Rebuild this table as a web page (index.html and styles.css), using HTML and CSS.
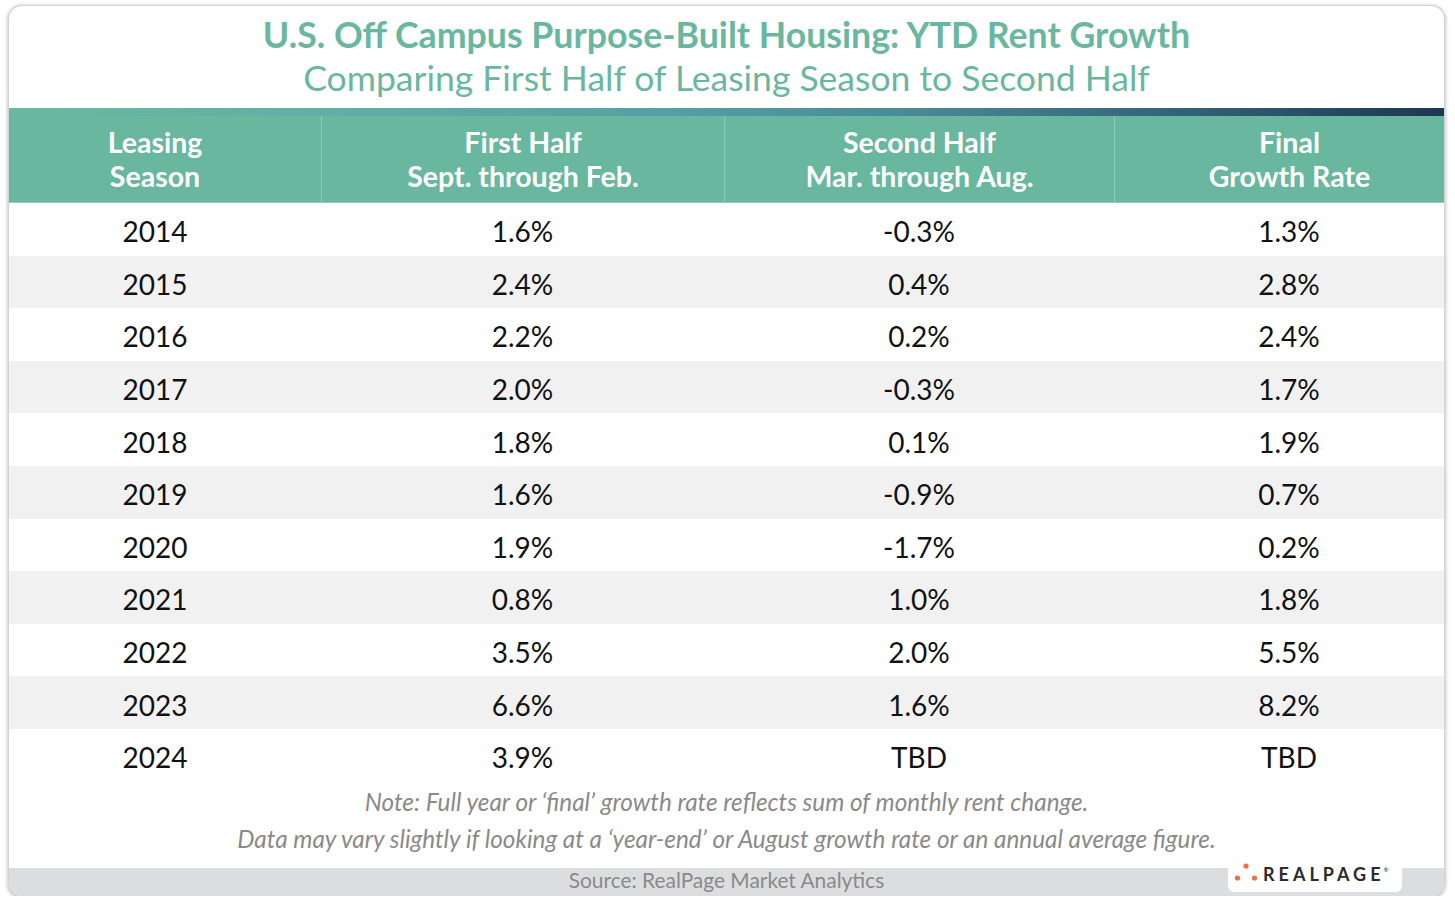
FILE: index.html
```html
<!DOCTYPE html>
<html lang="en">
<head>
<meta charset="utf-8">
<title>U.S. Off Campus Purpose-Built Housing: YTD Rent Growth</title>
<link rel="stylesheet" href="styles.css">
</head>
<body>
<div class="card">
  <header class="titles">
    <h1 class="title">U.S. Off Campus Purpose-Built Housing: YTD Rent Growth</h1>
    <h2 class="subtitle">Comparing First Half of Leasing Season to Second Half</h2>
  </header>
  <div class="accent"></div>
  <div class="table">
    <div class="row head">
      <div class="cell c1">Leasing<br>Season</div>
      <div class="cell c2">First Half<br>Sept. through Feb.</div>
      <div class="cell c3">Second Half<br>Mar. through Aug.</div>
      <div class="cell c4">Final<br>Growth Rate</div>
    </div>
    <div class="row"><div class="cell c1">2014</div><div class="cell c2">1.6%</div><div class="cell c3">-0.3%</div><div class="cell c4">1.3%</div></div>
    <div class="row alt"><div class="cell c1">2015</div><div class="cell c2">2.4%</div><div class="cell c3">0.4%</div><div class="cell c4">2.8%</div></div>
    <div class="row"><div class="cell c1">2016</div><div class="cell c2">2.2%</div><div class="cell c3">0.2%</div><div class="cell c4">2.4%</div></div>
    <div class="row alt"><div class="cell c1">2017</div><div class="cell c2">2.0%</div><div class="cell c3">-0.3%</div><div class="cell c4">1.7%</div></div>
    <div class="row"><div class="cell c1">2018</div><div class="cell c2">1.8%</div><div class="cell c3">0.1%</div><div class="cell c4">1.9%</div></div>
    <div class="row alt"><div class="cell c1">2019</div><div class="cell c2">1.6%</div><div class="cell c3">-0.9%</div><div class="cell c4">0.7%</div></div>
    <div class="row"><div class="cell c1">2020</div><div class="cell c2">1.9%</div><div class="cell c3">-1.7%</div><div class="cell c4">0.2%</div></div>
    <div class="row alt"><div class="cell c1">2021</div><div class="cell c2">0.8%</div><div class="cell c3">1.0%</div><div class="cell c4">1.8%</div></div>
    <div class="row"><div class="cell c1">2022</div><div class="cell c2">3.5%</div><div class="cell c3">2.0%</div><div class="cell c4">5.5%</div></div>
    <div class="row alt"><div class="cell c1">2023</div><div class="cell c2">6.6%</div><div class="cell c3">1.6%</div><div class="cell c4">8.2%</div></div>
    <div class="row"><div class="cell c1">2024</div><div class="cell c2">3.9%</div><div class="cell c3">TBD</div><div class="cell c4">TBD</div></div>
  </div>
  <div class="notes">
    <p>Note: Full year or ‘final’ growth rate reflects sum of monthly rent change.</p>
    <p>Data may vary slightly if looking at a ‘year-end’ or August growth rate or an annual average figure.</p>
  </div>
  <footer class="footer">
    <div class="spacer"></div>
    <div class="source">Source: RealPage Market Analytics</div>
    <div class="logo-wrap">
      <div class="logo">
        <svg class="dots" width="24" height="20" viewBox="0 0 24 20" aria-hidden="true">
          <circle cx="12" cy="4" r="2.6" fill="#f26d4c"/>
          <circle cx="3.5" cy="16" r="2.6" fill="#f26d4c"/>
          <circle cx="20.5" cy="16" r="2.6" fill="#f26d4c"/>
        </svg>
        <span class="brand">REALPAGE</span><span class="reg">®</span>
      </div>
    </div>
  </footer>
</div>
</body>
</html>
```

FILE: styles.css
```css
html, body {
  margin: 0;
  padding: 0;
  background: #ffffff;
}

body {
  font-family: Lato, "Open Sans", "Liberation Sans", sans-serif;
  padding: 6px 0 0 9px;
}

.card {
  width: 1435px;
  height: 890px;
  background: #ffffff;
  border-radius: 13px;
  overflow: hidden;
  box-shadow: 0 0 0 1px #d2d2d2, 0 1px 4px 1px rgba(0, 0, 0, 0.32);
  display: flex;
  flex-direction: column;
}

.titles {
  height: 102px;
  box-sizing: border-box;
  padding-top: 9px;
  text-align: center;
  color: #69b79e;
}

.title {
  margin: 0;
  font-size: 35.7px;
  font-weight: 700;
  line-height: 40px;
}

.subtitle {
  margin: 0;
  font-size: 35.5px;
  font-weight: 400;
  line-height: 46px;
}

.accent {
  height: 8px;
  background: linear-gradient(to right, #69b8a0 0%, #5eaea6 25%, #55a0a7 45%, #4a8b98 62%, #34667d 80%, #1d3754 100%);
}

.table {
  display: flex;
  flex-direction: column;
}

.row {
  display: grid;
  grid-template-columns: 312px 403px 390px 330px;
  height: 52.6px;
  align-items: stretch;
  font-size: 28px;
  color: #111111;
}

.row.alt {
  background: #f1f1f1;
}

.row .cell {
  padding-top: 4px;
}

.row.head {
  height: 86px;
  background: #69b79e;
  border-bottom: 1px solid #8fcdb8;
  color: #ffffff;
  font-size: 28.5px;
  font-weight: 700;
  line-height: 34px;
}

.row.head .cell {
  padding-top: 0;
}

.cell {
  text-align: center;
  display: flex;
  align-items: center;
  justify-content: center;
  box-sizing: border-box;
}

.row.head .cell + .cell {
  border-left: 1px solid #8ecbb6;
}

.row .cell.c1 {
  padding-right: 20px;
}

.row .cell.c4 {
  padding-left: 20px;
}

.notes {
  flex: 1;
  box-sizing: border-box;
  padding-top: 1px;
  text-align: center;
  font-style: italic;
  font-size: 24.3px;
  line-height: 37px;
  color: #8a8a8a;
}

.notes p {
  margin: 0;
}

.footer {
  height: 28px;
  flex: none;
  background: #dcdddf;
  display: grid;
  grid-template-columns: 1fr auto 1fr;
  align-items: start;
}

.source {
  font-size: 20.9px;
  line-height: 24px;
  color: #8a8a8a;
}

.logo-wrap {
  display: flex;
  justify-content: flex-end;
  padding-right: 42px;
}

.logo {
  width: 174px;
  height: 24px;
  box-sizing: border-box;
  background: #ffffff;
  border-radius: 0 0 6px 6px;
  display: flex;
  align-items: flex-start;
  padding-left: 6px;
}

.dots {
  margin-top: -6px;
  flex: none;
}

.brand {
  margin-left: 5px;
  margin-top: -4px;
  font-size: 18px;
  line-height: 20px;
  font-weight: 700;
  letter-spacing: 4px;
  color: #2b2b2b;
}

.reg {
  font-size: 6px;
  line-height: 8px;
  color: #2b2b2b;
  margin-left: -1px;
  margin-top: -2px;
}
```
